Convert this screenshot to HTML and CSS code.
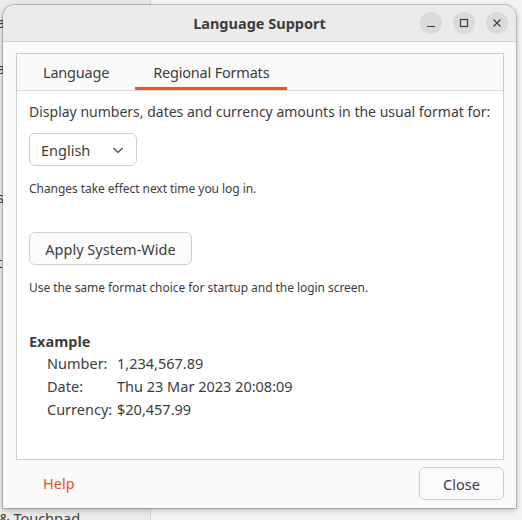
FILE: index.html
```html
<!DOCTYPE html>
<html>
<head>
<meta charset="utf-8">
<link rel="stylesheet" href="styles.css">
</head>
<body>
<div class="desktop">
  <div class="bg-sidebar">
    <div class="bg-item bg-a1">a</div>
    <div class="bg-item bg-a2">a</div>
    <div class="bg-item bg-s">s</div>
    <div class="bg-item bg-t">t</div>
    <div class="bg-item bg-touch">&amp; Touchpad</div>
  </div>
  <div class="bg-main"></div>

  <div class="window">
    <div class="header">
      <div class="title">Language Support</div>
      <div class="wm-buttons">
        <span class="wm-btn"><svg width="10" height="10" viewBox="0 0 10 10"><path d="M1 8.5h8" stroke="#3d3d3d" stroke-width="1.2"/></svg></span>
        <span class="wm-btn"><svg width="10" height="10" viewBox="0 0 10 10"><rect x="1.5" y="1.5" width="7" height="7" fill="none" stroke="#3d3d3d" stroke-width="1.2"/></svg></span>
        <span class="wm-btn"><svg width="10" height="10" viewBox="0 0 10 10"><path d="M1.5 1.5l7 7M8.5 1.5l-7 7" stroke="#3d3d3d" stroke-width="1.2"/></svg></span>
      </div>
    </div>
    <div class="body">
      <div class="notebook">
        <div class="tabs">
          <div class="tab">Language</div>
          <div class="tab active">Regional Formats</div>
        </div>
        <div class="panel">
          <div class="text">Display numbers, dates and currency amounts in the usual format for:</div>
          <div class="combo">
            <span>English</span>
            <svg width="12" height="8" viewBox="0 0 12 8"><path d="M1.5 2l4.5 4.5 4.5-4.5" fill="none" stroke="#3d3d3d" stroke-width="1.1"/></svg>
          </div>
          <div class="small note1">Changes take effect next time you log in.</div>
          <div class="button apply">Apply System-Wide</div>
          <div class="small note2">Use the same format choice for startup and the login screen.</div>
          <div class="example-title">Example</div>
          <div class="example">
            <div class="lbl">Number:</div><div class="val">1,234,567.89</div>
            <div class="lbl">Date:</div><div class="val">Thu 23 Mar 2023 20:08:09</div>
            <div class="lbl">Currency:</div><div class="val">$20,457.99</div>
          </div>
        </div>
      </div>
      <div class="actions">
        <div class="help">Help</div>
        <div class="button close">Close</div>
      </div>
    </div>
  </div>
</div>
</body>
</html>
```
FILE: styles.css
```css
html, body {
  margin: 0;
  padding: 0;
}
body {
  width: 522px;
  height: 520px;
  overflow: hidden;
  font-family: "Noto Sans", "Open Sans", sans-serif;
  color: #3d3d3d;
}
.desktop {
  position: relative;
  width: 522px;
  height: 520px;
  display: flex;
}
.bg-sidebar {
  width: 150px;
  height: 520px;
  background: #ebebeb;
  border-right: 1px solid #d4d4d4;
  position: relative;
}
.bg-main {
  flex: 1;
  background: #f4f4f4;
}
.bg-item {
  position: absolute;
  font-size: 14.5px;
  line-height: 20px;
  color: #3d3d3d;
  white-space: nowrap;
}
.bg-a1 { left: -3px; top: 12px; }
.bg-a2 { left: -3px; top: 58px; }
.bg-s { left: -3px; top: 187px; }
.bg-t { left: -3px; top: 252px; }
.bg-touch { left: -1px; top: 508px; }

.window {
  position: absolute;
  left: 3px;
  top: 5px;
  width: 513px;
  height: 503px;
  border-radius: 12px 12px 0 0;
  background: #fafafa;
  box-shadow: 0 0 0 1px rgba(0,0,0,0.18), 0 2px 6px rgba(0,0,0,0.25);
  display: flex;
  flex-direction: column;
  overflow: hidden;
}
.header {
  height: 36px;
  background: #ebebeb;
  border-bottom: 1px solid #d2d2d2;
  position: relative;
  display: flex;
  align-items: center;
  justify-content: center;
  flex-shrink: 0;
}
.title {
  font-weight: bold;
  font-size: 14.5px;
  color: #3d3d3d;
}
.wm-buttons {
  position: absolute;
  right: 8px;
  top: 7px;
  display: flex;
  gap: 11px;
}
.wm-btn {
  width: 22px;
  height: 22px;
  border-radius: 50%;
  background: #dadada;
  display: flex;
  align-items: center;
  justify-content: center;
}
.body {
  flex: 1;
  padding: 11px 12px 8px 13px;
  display: flex;
  flex-direction: column;
}
.notebook {
  height: 405px;
  border: 1px solid #cdcdcd;
  display: flex;
  flex-direction: column;
}
.tabs {
  height: 36px;
  background: #fafafa;
  border-bottom: 1px solid #dcdcdc;
  display: flex;
  padding-left: 8px;
  gap: 8px;
  flex-shrink: 0;
}
.tab {
  padding: 0 18px;
  font-size: 14.5px;
  letter-spacing: -0.2px;
  line-height: 37px;
  height: 36px;
  color: #3d3d3d;
  box-sizing: border-box;
}
.tab.active {
  border-bottom: 3px solid #e95420;
}
.panel {
  flex: 1;
  background: #ffffff;
  padding: 11px 12px;
  display: flex;
  flex-direction: column;
  align-items: flex-start;
}
.text {
  font-size: 14px;
  line-height: 20px;
  white-space: nowrap;
}
.combo {
  margin-top: 11px;
  width: 108px;
  height: 33px;
  box-sizing: border-box;
  border: 1px solid #cfcfcf;
  border-radius: 6px;
  display: flex;
  align-items: center;
  justify-content: space-between;
  padding: 0 12px 0 11px;
  font-size: 14.5px;
}
.small {
  font-size: 12px;
  line-height: 16px;
  letter-spacing: -0.05px;
}
.note1 { margin-top: 15px; }
.button {
  height: 33px;
  box-sizing: border-box;
  border: 1px solid #cfcfcf;
  border-radius: 6px;
  background: #fbfbfb;
  display: flex;
  align-items: center;
  justify-content: center;
  font-size: 14.5px;
}
.apply {
  margin-top: 35px;
  width: 163px;
}
.note2 { margin-top: 15px; }
.example-title {
  margin-top: 35px;
  font-weight: bold;
  font-size: 14.5px;
  line-height: 20px;
}
.example {
  margin-top: 2px;
  padding-left: 18px;
  display: grid;
  grid-template-columns: 70px auto;
  row-gap: 3px;
  font-size: 14.5px;
  line-height: 20px;
}
.actions {
  flex: 1;
  display: flex;
  align-items: flex-end;
  justify-content: space-between;
}
.help {
  color: #e95420;
  font-size: 14.5px;
  padding: 0 0 0 27px;
  line-height: 33px;
}
.close {
  width: 85px;
}
```
